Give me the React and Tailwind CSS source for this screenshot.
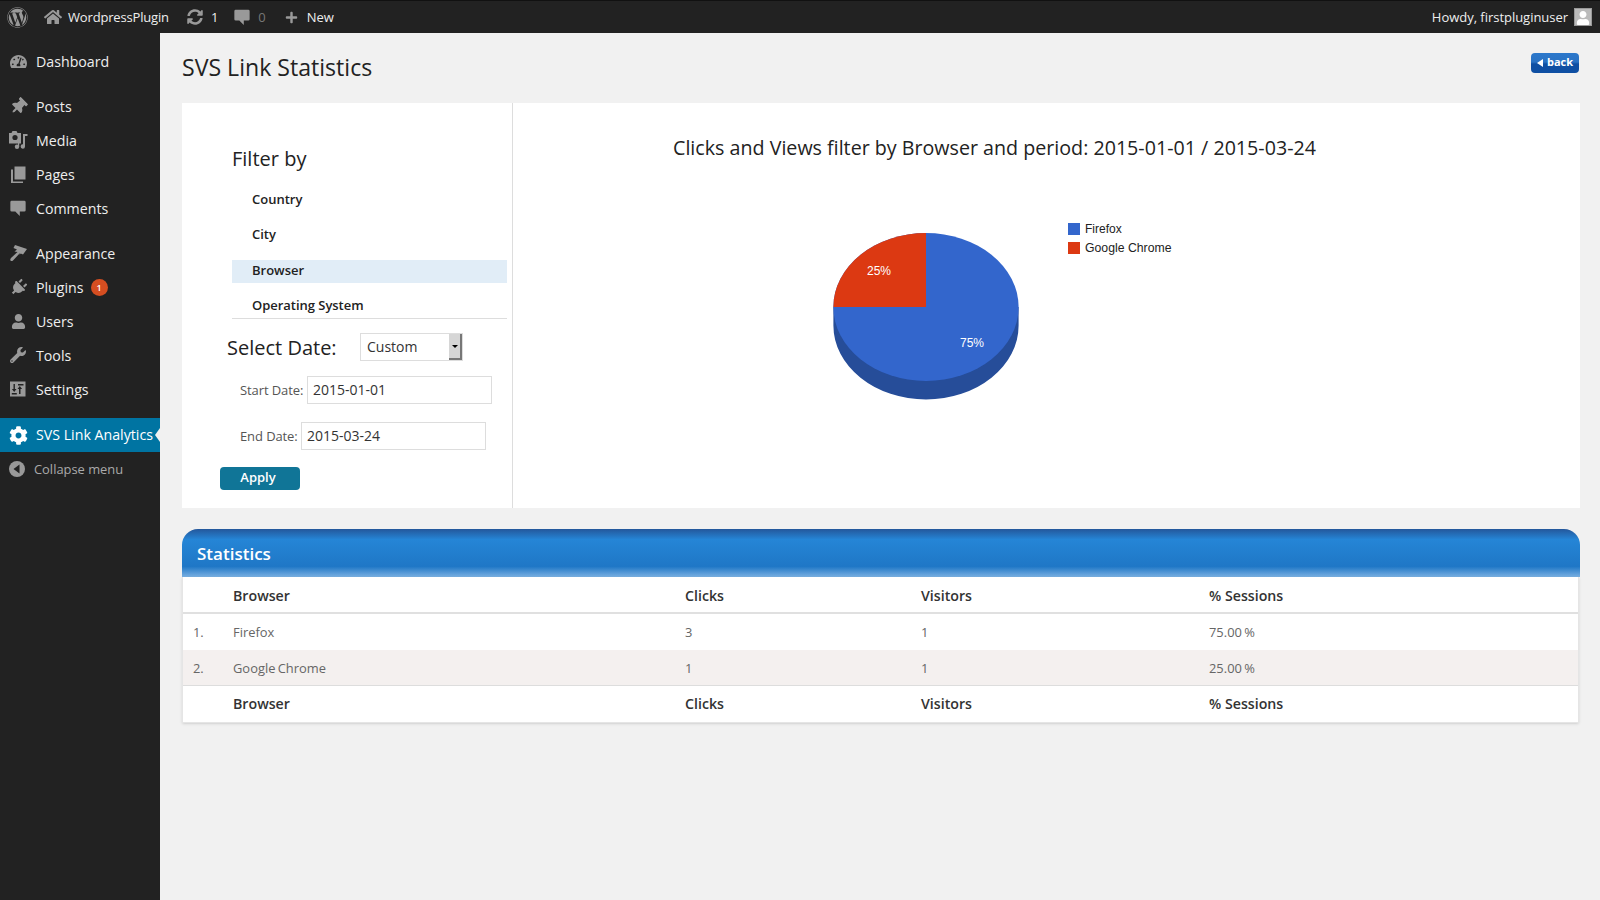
import React from "react";
import { FaWordpress, FaHome, FaSyncAlt, FaPlus, FaTachometerAlt, FaThumbtack, FaPlug, FaUser, FaWrench, FaCog } from "react-icons/fa";

const Bubble = ({ s = 18 }) => (
  <svg viewBox="0 0 20 20" width={s} height={s} fill="#999">
    <path d="M3 2h14a1.500 1.500 0 0 1 1.500 1.500v9a1.500 1.500 0 0 1-1.500 1.500h-5v5l-5-5H3a1.500 1.500 0 0 1-1.500-1.500v-9A1.500 1.500 0 0 1 3 2z" />
  </svg>
);
const BrushIcon = () => (
  <svg viewBox="0 0 20 20" className="h-5 w-5" fill="#999">
    <path d="M7 2 L19 6 L15 11.500 L12.800 10.500 L11.500 11.800 L12 10 L5 17.500 Q3.500 18.500 2.500 17.500 Q1.800 16.500 3 15 L9.500 9 L6.500 8.500 L9 6.500 L5.500 5z" />
  </svg>
);
const MediaIcon = () => (
  <svg viewBox="0 0 20 20" className="h-5 w-5" fill="#999">
    <path d="M1 3h2.500l1-2h4l1 2H13v10.500H1z" />
    <circle cx="7" cy="7.500" r="2.600" fill="#222" />
    <path d="M15 4h4.500v2H17v10.500a2.200 2.200 0 1 1-2-2.200z" />
    <circle cx="9" cy="16.800" r="2.200" />
    <path d="M10 12h1.200v4.800H10z" />
  </svg>
);
const PagesIcon = () => (
  <svg viewBox="0 0 20 20" className="h-5 w-5" fill="#999">
    <path d="M6.500 2.500h11v13h-11z" />
    <path d="M3 5.500h2v12h10v1.500H3z" />
  </svg>
);
const SettingsIcon = () => (
  <svg viewBox="0 0 20 20" className="h-5 w-5">
    <rect x="2" y="2.500" width="15.500" height="15" fill="#999" />
    <path d="M5.500 5h1.400v5h1.600l-2.300 3-2.300-3h1.600z M12.500 15H11v-5H9.500l2.300-3 2.300 3h-1.600z M3.800 14h5v1.500h-5z M10 5h5.500v1.400H10z" fill="#222" />
  </svg>
);
const CollapseIcon = () => (
  <svg viewBox="0 0 16 16" className="h-4 w-4">
    <circle cx="8" cy="8" r="8" fill="#999" />
    <path d="M10.500 3.500v9L4.500 8z" fill="#222" />
  </svg>
);

const items = [
  { label: "Dashboard", icon: <FaTachometerAlt size={17} color="#999" />, mb: "mb-[11px]" },
  { label: "Posts", icon: <FaThumbtack size={17} color="#999" className="rotate-45" /> },
  { label: "Media", icon: <MediaIcon /> },
  { label: "Pages", icon: <PagesIcon /> },
  { label: "Comments", icon: <Bubble />, mb: "mb-[11px]" },
  { label: "Appearance", icon: <BrushIcon /> },
  { label: "Plugins", icon: <FaPlug size={17} color="#999" className="rotate-45" />, badge: true },
  { label: "Users", icon: <FaUser size={15} color="#999" /> },
  { label: "Tools", icon: <FaWrench size={16} color="#999" /> },
  { label: "Settings", icon: <SettingsIcon />, mb: "mb-[12px]" },
];

function Sidebar() {
  return (
    <aside className="w-40 shrink-0 bg-[#222222] pt-[11px] text-[14.2px] text-[#eeeeee]">
      <ul>
        {items.map((it) => (
          <li key={it.label} className={`flex h-[34px] items-center ${it.mb || ""}`}>
            <span className="flex w-9 justify-center">{it.icon}</span>
            <span className="mt-[2px]">{it.label}</span>
            {it.badge && (
              <span className="ml-[7px] mt-px flex h-[17px] w-[17px] items-center justify-center rounded-full bg-[#d54e21] text-[9px] font-semibold text-white">1</span>
            )}
          </li>
        ))}
        <li className="relative flex h-[34px] items-center bg-[#0074a2] text-white">
          <span className="flex w-9 justify-center"><FaCog size={19} color="#fff" /></span>
          <span className="whitespace-nowrap">SVS Link Analytics</span>
          <span className="absolute right-0 top-[10px] h-0 w-0 border-y-[7px] border-r-[5px] border-y-transparent border-r-[#f1f1f1]" />
        </li>
        <li className="flex h-[34px] items-center text-[12.9px] text-[#aaaaaa]">
          <span className="flex w-[34px] justify-center"><CollapseIcon /></span>
          <span className="mt-[2px]">Collapse menu</span>
        </li>
      </ul>
    </aside>
  );
}

function TopBar() {
  return (
    <header className="flex h-[33px] items-center justify-between border-t border-[#111] bg-[#222222] text-[13px] text-[#eeeeee]">
      <div className="flex items-center">
        <FaWordpress size={21} color="#999" className="ml-[7px]" />
        <FaHome size={18} color="#999" className="ml-[16px]" />
        <span className="ml-[6px] mt-[2px] tracking-[-0.17px]">WordpressPlugin</span>
        <FaSyncAlt size={16} color="#999" className="ml-[18px]" />
        <span className="ml-[8px] mt-[2px]">1</span>
        <span className="ml-[15px]"><Bubble /></span>
        <span className="ml-[7px] mt-[2px] text-[#777]">0</span>
        <FaPlus size={13} color="#999" className="ml-[19px]" />
        <span className="ml-[9px] mt-[2px]">New</span>
      </div>
      <div className="mr-2 flex items-center">
        <span className="mt-[2px] tracking-[-0.03px]">Howdy, firstpluginuser</span>
        <span className="ml-[6px] flex h-[18px] w-[18px] items-end justify-center overflow-hidden border border-[#999] bg-[#bbbbbb]">
          <FaUser size={14} color="#fff" />
        </span>
      </div>
    </header>
  );
}

function FilterPanel() {
  return (
    <div className="w-[331px] shrink-0 border-r border-[#dddddd] pt-[42px]">
      <div className="ml-[50px] text-[20px] leading-[28px] text-[#222]">Filter by</div>
      <ul className="ml-[50px] mr-[5px] mt-[15px] border-b border-[#dddddd] text-[13px] font-semibold text-[#222]">
        <li className="mb-[11px] flex h-[24px] items-center pl-5">Country</li>
        <li className="mb-[13px] flex h-[24px] items-center pl-5">City</li>
        <li className="mb-[11px] flex h-[23px] items-center bg-[#e1edf7] pb-[2px] pl-5">Browser</li>
        <li className="flex h-[24px] items-center pl-5 tracking-[-0.03px]">Operating System</li>
      </ul>
      <div className="ml-[45px] mt-[13px] flex items-center">
        <span className="mt-[2px] w-[133px] text-[20px] leading-[28px] text-[#222]">Select Date:</span>
        <div className="flex h-[28px] w-[103px] items-center justify-between border border-[#dddddd] pl-[6px] text-[14px] text-[#333]">
          <span className="mb-px">Custom</span>
          <span className="flex h-[26px] w-[13px] items-center justify-center border-b-2 border-r-2 border-[#777] bg-[#d6d6d6]">
            <span className="h-0 w-0 border-x-[3px] border-t-[3px] border-x-transparent border-t-black" />
          </span>
        </div>
      </div>
      <div className="ml-[58px] mt-[14px] flex items-center text-[13px] text-[#555]">
        <span className="mt-[2px] w-[67px] tracking-[-0.1px]">Start Date:</span>
        <div className="flex h-[28px] w-[185px] items-center border border-[#dddddd] pb-px pl-[5px] text-[14px] text-[#333]">2015-01-01</div>
      </div>
      <div className="ml-[58px] mt-[18px] flex items-center text-[13px] text-[#555]">
        <span className="mt-[2px] w-[61px] tracking-[-0.1px]">End Date:</span>
        <div className="flex h-[28px] w-[185px] items-center border border-[#dddddd] pb-px pl-[5px] text-[14px] text-[#333]">2015-03-24</div>
      </div>
      <div className="ml-[38px] mt-[17px] flex h-[23px] w-[80px] items-center justify-center rounded-[4px] bg-[#107597] pb-px pr-[4px] text-[13px] font-semibold text-white">Apply</div>
    </div>
  );
}

function Chart() {
  return (
    <div className="flex-1">
      <h2 className="mt-[30px] pr-[104px] text-center text-[19.66px] leading-[30px] text-[#222]">Clicks and Views filter by Browser and period: 2015-01-01 / 2015-03-24</h2>
      <svg viewBox="0 0 1067 275" className="mt-[40px] block h-[275px] w-[1067px]">
        <g transform="translate(-513 -203)">
          <path d="M833.4 307 v18.500 A92.600 74 0 0 0 1018.600 325.500 v-18.500 z" fill="#264d99" />
          <ellipse cx="926" cy="307" rx="92.600" ry="74" fill="#3366cc" />
          <path d="M926 307 L833.4 307 A92.600 74 0 0 1 926 233 Z" fill="#dc3912" />
          <text x="879" y="275" textAnchor="middle" fontFamily="Liberation Sans, Arial, sans-serif" fontSize="12" fill="#fff">25%</text>
          <text x="972" y="347" textAnchor="middle" fontFamily="Liberation Sans, Arial, sans-serif" fontSize="12" fill="#fff">75%</text>
          <rect x="1068" y="223" width="12" height="12" fill="#3366cc" />
          <rect x="1068" y="242" width="12" height="12" fill="#dc3912" />
          <text x="1085" y="233" fontFamily="Liberation Sans, Arial, sans-serif" fontSize="12" fill="#222">Firefox</text>
          <text x="1085" y="252" fontFamily="Liberation Sans, Arial, sans-serif" fontSize="12.25" fill="#222">Google Chrome</text>
        </g>
      </svg>
    </div>
  );
}

function Row({ n, a, b, c, d, head, className = "h-[36px]" }) {
  return (
    <div className={`grid grid-cols-[40px_452px_236px_288px_1fr] items-center pl-[10px] ${head ? "text-[14.2px] font-semibold text-[#333]" : "text-[12.9px] text-[#666] [word-spacing:-1px]"} ${className}`}>
      <span>{n}</span><span>{a}</span><span>{b}</span><span>{c}</span><span>{d}</span>
    </div>
  );
}

function Stats() {
  return (
    <section className="mt-[21px]">
      <div className="flex h-[48px] items-center rounded-t-[16px] pl-[15px] pt-[2px] text-[17px] font-semibold text-white" style={{ backgroundImage: "linear-gradient(to bottom,#24579b 0,#2585d6 22%,#1f77c6 78%,#7ab0e2 100%)" }}>Statistics</div>
      <div className="mr-px border-x border-b border-[#e5e5e5] bg-white shadow-sm">
        <Row head a="Browser" b="Clicks" c="Visitors" d="% Sessions" className="h-[37px] border-b-2 border-[#e0e0e0] pt-[2px]" />
        <Row n="1." a="Firefox" b="3" c="1" d="75.00 %" className="h-[36px] pt-[2px]" />
        <Row n="2." a="Google Chrome" b="1" c="1" d="25.00 %" className="h-[36px] border-b border-[#dddddd] bg-[#f4f0ef] pt-[2px]" />
        <Row head a="Browser" b="Clicks" c="Visitors" d="% Sessions" />
      </div>
    </section>
  );
}

export default function App() {
  return (
    <div className="flex min-h-[900px] flex-col bg-[#f1f1f1] font-['Open_Sans',sans-serif]">
      <TopBar />
      <div className="flex flex-1">
        <Sidebar />
        <main className="flex-1 pl-[22px] pr-5">
          <div className="flex h-[70px] items-start justify-between">
            <h1 className="mt-[16px] text-[23.1px] leading-[36px] text-[#222]">SVS Link Statistics</h1>
            <span className="mr-px mt-[20px] flex h-[20px] w-[48px] items-center justify-center gap-[4px] rounded-[4px] pb-px text-[11px] font-bold text-white" style={{ backgroundImage: "linear-gradient(to bottom,#2c78cb 0,#2a72c4 45%,#0f4fa3 55%,#0f4fa3 100%)" }}>
              <span className="h-0 w-0 border-y-[4px] border-r-[6px] border-y-transparent border-r-white" />back
            </span>
          </div>
          <div className="flex h-[405px] bg-white">
            <FilterPanel />
            <Chart />
          </div>
          <Stats />
        </main>
      </div>
    </div>
  );
}
